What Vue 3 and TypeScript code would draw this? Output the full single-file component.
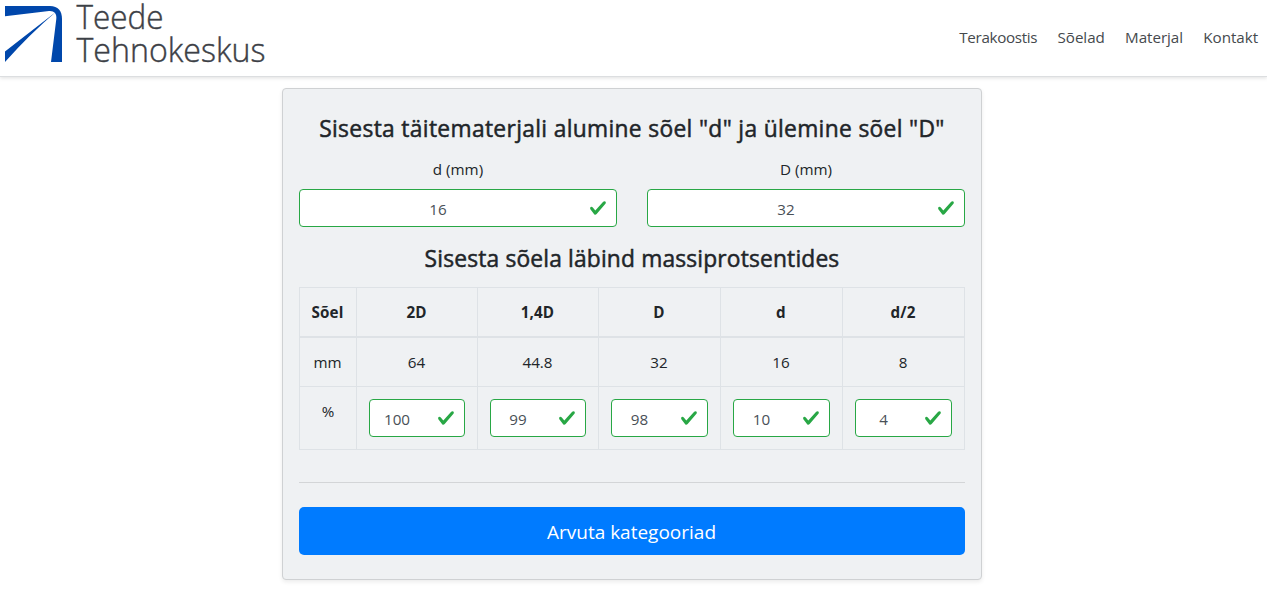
<script setup lang="ts">
import { reactive } from 'vue'

interface Sieve {
  label: string
  size: string
  percent: string
}

const links: string[] = ['Terakoostis', 'Sõelad', 'Materjal', 'Kontakt']

const limits = reactive([
  { id: 'lower', label: 'd (mm)', value: '16' },
  { id: 'upper', label: 'D (mm)', value: '32' },
])

const sieves = reactive<Sieve[]>([
  { label: '2D', size: '64', percent: '100' },
  { label: '1,4D', size: '44.8', percent: '99' },
  { label: 'D', size: '32', percent: '98' },
  { label: 'd', size: '16', percent: '10' },
  { label: 'd/2', size: '8', percent: '4' },
])

const checkPath =
  'M2.3 6.73L.6 4.53c-.4-1.04.46-1.4 1.1-.8l1.1 1.4 3.4-3.8c.6-.63 1.6-.27 1.2.7l-4 4.6c-.43.5-.8.4-1.1.1z'
</script>

<template>
  <div class="page">
    <header class="navbar">
      <svg class="logo" width="270" height="70" viewBox="0 0 270 70">
        <g fill="#0047ab">
          <path d="M5 6H50C58 6 62 11 62 19V62H51L56.300 19C57 13.500 54 10.600 49 11L5 16.300Z" />
          <path d="M55.500 12.300Q34 29 5 51.500V62Q30 34 55.500 12.300Z" />
        </g>
        <text x="76.500" y="29" textLength="87" lengthAdjust="spacingAndGlyphs">Teede</text>
        <text x="76.500" y="62" textLength="189" lengthAdjust="spacingAndGlyphs">Tehnokeskus</text>
      </svg>
      <nav class="links">
        <a v-for="link in links" :key="link">{{ link }}</a>
      </nav>
    </header>

    <main class="card">
      <h1 class="title">Sisesta täitematerjali alumine sõel "d" ja ülemine sõel "D"</h1>
      <div class="limits">
        <div v-for="limit in limits" :key="limit.id" class="limit">
          <label :for="limit.id">{{ limit.label }}</label>
          <div class="field">
            <input :id="limit.id" v-model="limit.value" type="text" />
            <svg class="check" viewBox="0 0 8 8"><path :d="checkPath" /></svg>
          </div>
        </div>
      </div>

      <h2 class="title subtitle">Sisesta sõela läbind massiprotsentides</h2>
      <table>
        <colgroup>
          <col class="first" />
          <col v-for="sieve in sieves" :key="sieve.label" />
        </colgroup>
        <thead>
          <tr>
            <th>Sõel</th>
            <th v-for="sieve in sieves" :key="sieve.label">{{ sieve.label }}</th>
          </tr>
        </thead>
        <tbody>
          <tr class="sizes">
            <td>mm</td>
            <td v-for="sieve in sieves" :key="sieve.label">{{ sieve.size }}</td>
          </tr>
          <tr class="percents">
            <td>%</td>
            <td v-for="sieve in sieves" :key="sieve.label">
              <div class="field">
                <input v-model="sieve.percent" type="text" />
                <svg class="check" viewBox="0 0 8 8"><path :d="checkPath" /></svg>
              </div>
            </td>
          </tr>
        </tbody>
      </table>
      <hr />
      <button type="button">Arvuta kategooriad</button>
    </main>
  </div>
</template>

<style>
body {
  margin: 0;
  background: #fff;
  overflow: hidden;
}
</style>

<style scoped>
.page,
.page * {
  box-sizing: border-box;
}

.page {
  height: 604px;
  font-family: 'Open Sans', 'Noto Sans', sans-serif;
  font-size: 15.2px;
  line-height: 24px;
  color: #212529;
}

.navbar {
  display: flex;
  justify-content: space-between;
  height: 77px;
  border-bottom: 1px solid #dcdee0;
  box-shadow: 0 1px 4px rgba(0, 0, 0, 0.13);
}

.logo {
  display: block;
  overflow: visible;
}

.logo text {
  font-family: 'Open Sans', 'Noto Sans', sans-serif;
  font-size: 32.5px;
  font-weight: 300;
  fill: #3c4046;
  stroke: #3c4046;
  stroke-width: 0.4px;
}

.links {
  display: flex;
  gap: 20.3px;
  padding: 25px 9px 0 0;
  color: #45494d;
  letter-spacing: -0.05px;
}

.links a:first-child {
  letter-spacing: -0.33px;
}

.card {
  width: 700px;
  height: 492px;
  margin: 11px 0 0 282px;
  padding: 25px 16px;
  border: 1px solid #cfd1d3;
  border-radius: 4px;
  background: #eff1f3;
  box-shadow: 0 2px 4px rgba(0, 0, 0, 0.08);
}

.title {
  margin: 0;
  font-size: 22.8px;
  line-height: 29px;
  font-weight: 500;
  letter-spacing: 0.33px;
  text-align: center;
  white-space: nowrap;
  -webkit-text-stroke: 0.5px #212529;
}

.limits {
  display: flex;
  gap: 30px;
  margin-top: 14px;
}

.limit {
  flex: 1;
}

.limit label {
  display: block;
  margin-bottom: 8px;
  text-align: center;
}

.field {
  position: relative;
  height: 38px;
}

.field input {
  display: block;
  width: 100%;
  height: 38px;
  padding: 2px 52px 0 12px;
  border: 1px solid #28a745;
  border-radius: 4px;
  outline: none;
  background: #fff;
  color: #495057;
  font: inherit;
  text-align: center;
}

.check {
  position: absolute;
  top: 10px;
  right: 10px;
  width: 18px;
  height: 18px;
  fill: #28a745;
}

.subtitle {
  margin-top: 17px;
  letter-spacing: 0.16px;
}

table {
  width: 666px;
  margin-top: 14px;
  border-collapse: collapse;
  table-layout: fixed;
  text-align: center;
}

.first {
  width: 57px;
}

col:nth-child(2),
col:nth-child(3) {
  width: 121px;
}

th,
td {
  height: 49px;
  padding: 0 1px 0 0;
  border: 1px solid #dee2e6;
}

th {
  border-bottom-width: 2px;
  font-weight: 700;
  letter-spacing: 0.15px;
}

.sizes td {
  height: 50px;
}

.percents td {
  height: 63px;
  padding: 12px;
  vertical-align: top;
}

hr {
  margin: 32px 0 24px;
  border: 0;
  border-top: 1px solid #d3d5d7;
}

button {
  display: block;
  width: 100%;
  height: 48px;
  padding: 2px 1px 0 0;
  border: 0;
  border-radius: 5px;
  background: #007bff;
  color: #fff;
  font-family: inherit;
  font-size: 19px;
  line-height: 30px;
}
</style>
